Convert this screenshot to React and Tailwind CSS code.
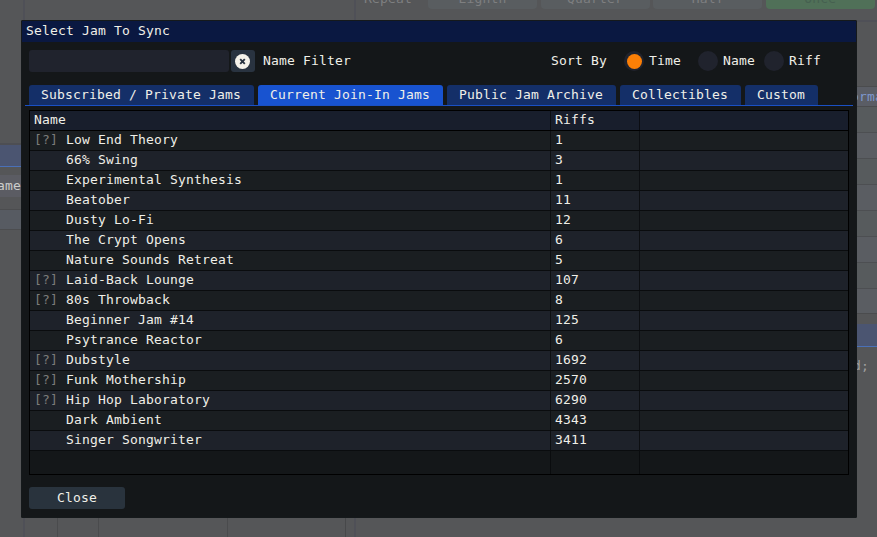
const JAMS = [
  ["Low End Theory", 1, true],
  ["66% Swing", 3, false],
  ["Experimental Synthesis", 1, false],
  ["Beatober", 11, false],
  ["Dusty Lo-Fi", 12, false],
  ["The Crypt Opens", 6, false],
  ["Nature Sounds Retreat", 5, false],
  ["Laid-Back Lounge", 107, true],
  ["80s Throwback", 8, true],
  ["Beginner Jam #14", 125, false],
  ["Psytrance Reactor", 6, false],
  ["Dubstyle", 1692, true],
  ["Funk Mothership", 2570, true],
  ["Hip Hop Laboratory", 6290, true],
  ["Dark Ambient", 4343, false],
  ["Singer Songwriter", 3411, false],
];

const TABS = [
  ["Subscribed / Private Jams", "w-[225px]"],
  ["Current Join-In Jams", "w-[185px]"],
  ["Public Jam Archive", "w-[169px]"],
  ["Collectibles", "w-[121px]"],
  ["Custom", "w-[73px]"],
];

function Backdrop() {
  return (
    <div className="flex h-full w-full bg-[#555658]">
      <div className="flex w-[25px] shrink-0 flex-col overflow-hidden border-r-2 border-[#4f5057]">
        <div className="h-[143px] shrink-0" />
        <div className="h-[2px] shrink-0 bg-[#4d4e53]" />
        <div className="h-[22px] shrink-0 border-b border-[#4a70b8] bg-[#4b5571]" />
        <div className="mt-2 flex h-[22px] shrink-0 items-center bg-[#5b5c63]">
          <span className="-ml-[3px] text-[#cccccb]">ame</span>
        </div>
        <div className="mt-3 h-[21px] shrink-0 border-y border-[#4c4d4f] bg-[#575b62]" />
      </div>
      <div className="flex w-[329px] shrink-0 items-end">
        <div className="h-6 w-[33px] border-r border-[#4a4b4d]" />
        <div className="h-6 w-[41px] border-r border-[#4a4b4d]" />
        <div className="h-6 w-[129px] border-r border-[#4a4b4d]" />
        <div className="h-6 w-[118px] border-r border-[#47484a]" />
      </div>
      <div className="flex min-w-0 flex-1 flex-col overflow-hidden border-l-2 border-[#4f5057]">
        <div className="flex h-[20px] shrink-0 items-start text-[#7e7f80]">
          <span className="-mt-[11px] ml-2 w-16 shrink-0">Repeat</span>
          <div className="flex shrink-0 gap-[3.6px]">
            {["Eighth", "Quarter", "Half"].map((label) => (
              <div key={label} className="h-[9px] w-[109px] rounded-b bg-[#595d60] text-center">
                <span className="relative -top-[11px]">{label}</span>
              </div>
            ))}
            <div className="h-[9px] w-[109px] rounded-b bg-[#507058] text-center text-[#466050]">
              <span className="relative -top-[11px]">Once</span>
            </div>
          </div>
        </div>
        <div className="h-[2px] shrink-0 bg-[#4f5057]" />
        <div className="ml-[495px] flex shrink-0 flex-col pt-16">
          <div className="flex h-[21px] items-center border-y border-[#4b4c4e] bg-[#5a5d65] text-[#7e98ce]">
            <span className="ml-0">orma</span>
          </div>
          {[0, 1, 2, 3, 4, 5, 6].map((i) => (
            <div
              key={i}
              className={`h-[26px] border-b border-[#4d4f52] ${i % 2 ? "bg-[#5a5d62]" : "bg-[#575b5d]"}`}
            />
          ))}
          <div className="h-[25px] border-b border-[#4b4c4e] bg-[#5a5d62]" />
          <div className="mt-[10px] h-[23px] border-b border-[#4a70b8] bg-[#4b5571]" />
          <div className="ml-[2px] mt-[9px] text-[#a0a0a0]">d;</div>
        </div>
      </div>
    </div>
  );
}

function Radio({ label, checked, className }) {
  return (
    <div className={`flex items-center gap-[5px] ${className}`}>
      <div className="flex size-5 items-center justify-center rounded-full bg-[#20232d]">
        {checked && <div className="size-[15px] rounded-full bg-[#fb7f06]" />}
      </div>
      <span>{label}</span>
    </div>
  );
}

function Row({ name, riffs, hint, odd }) {
  return (
    <div
      className={`flex h-5 shrink-0 border-b border-[#0a0c0e] leading-[17px] ${odd ? "bg-[#1e222a]" : "bg-[#1a1e21]"}`}
    >
      <div className="flex w-[521px] border-r border-[#0d0f12] pl-1">
        <span className="w-8 text-[#7c7d7b]">{hint ? "[?]" : ""}</span>
        <span>{name}</span>
      </div>
      <div className="w-[89px] border-r border-[#0d0f12] pl-1">{riffs}</div>
    </div>
  );
}

function JamTable() {
  return (
    <div className="mx-[7px] mt-1 flex h-[365px] w-[820px] flex-col border border-black">
      <div className="flex h-5 shrink-0 border-b border-black bg-[#181e2c] leading-[17px]">
        <div className="w-[521px] border-r border-[#0b0d12] pl-1">Name</div>
        <div className="w-[89px] border-r border-[#0b0d12] pl-1">Riffs</div>
      </div>
      {JAMS.map(([name, riffs, hint], i) => (
        <Row key={name} name={name} riffs={riffs} hint={hint} odd={i % 2 === 1} />
      ))}
      <div className="flex flex-1">
        <div className="w-[521px] border-r border-[#0a0c0e]" />
        <div className="w-[89px] border-r border-[#0a0c0e]" />
      </div>
    </div>
  );
}

export default function App() {
  return (
    <div className="relative h-[537px] w-[877px] overflow-hidden whitespace-pre font-['DejaVu_Sans_Mono',monospace] text-[13px] leading-5 tracking-[0.174px] text-[#f0efe8]">
      <Backdrop />
      <div className="absolute left-[21px] top-5 flex h-[498px] w-[836px] flex-col rounded-[1px] border border-[#15191b] bg-[#141719]">
        <div className="h-[21px] shrink-0 bg-[#0a1841] pl-1 leading-[20px]">Select Jam To Sync</div>
        <div className="mt-2 flex h-[22px] shrink-0 items-center pl-[7px]">
          <div className="h-[22px] w-[200px] rounded-[3px] bg-[#20232d]" />
          <div className="ml-[2px] flex h-[22px] w-6 items-start rounded-[3px] bg-[#293340] pl-1 pt-1">
            <svg width="15" height="15" viewBox="0 0 15 15">
              <circle cx="7.5" cy="7.5" r="7.5" fill="#f5f2ea" />
              <path d="M5.2 5.2L9.8 9.8M9.8 5.2L5.2 9.8" stroke="#293340" strokeWidth="1.9" />
            </svg>
          </div>
          <span className="ml-2 w-[288px]">Name Filter</span>
          <span className="w-[73px]">Sort By</span>
          <Radio label="Time" checked className="w-[74px]" />
          <Radio label="Name" className="w-[66px]" />
          <Radio label="Riff" />
        </div>
        <div className="mx-[3px] mt-[13px] flex h-[21px] shrink-0 gap-1 border-b border-[#1a50c4] pl-1">
          {TABS.map(([label, width], i) => (
            <div
              key={label}
              className={`h-5 rounded-t-[3px] pl-3 leading-[20px] ${width} ${i === 1 ? "bg-[#1853d0]" : "bg-[#142f68]"}`}
            >
              {label}
            </div>
          ))}
        </div>
        <JamTable />
        <div className="ml-[7px] mt-3 h-[22px] w-24 rounded-[3px] bg-[#29333d] text-center leading-[22px]">
          Close
        </div>
      </div>
    </div>
  );
}
